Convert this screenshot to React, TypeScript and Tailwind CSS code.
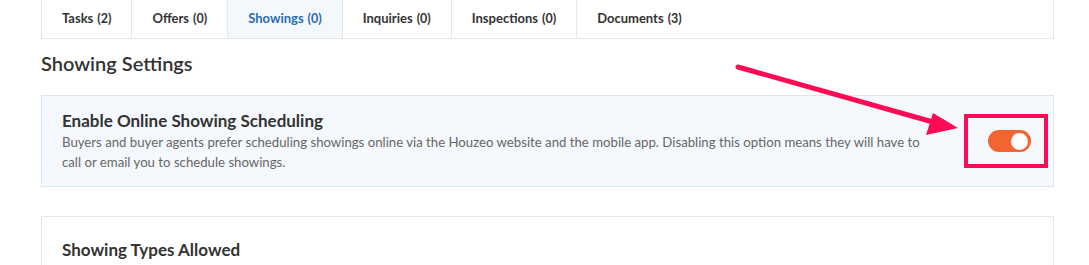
const tabs = [
  { label: "Tasks", count: 2 },
  { label: "Offers", count: 0 },
  { label: "Showings", count: 0, active: true },
  { label: "Inquiries", count: 0 },
  { label: "Inspections", count: 0 },
  { label: "Documents", count: 3 },
];

export default function App() {
  return (
    <main
      className="relative h-[265px] w-[1089px] overflow-hidden bg-white pl-[41px] pr-[35px]"
      style={{ fontFamily: "Lato, 'Noto Sans', sans-serif" }}
    >
      {/* Tabs */}
      <div className="flex h-[39px] border-x border-b border-[#e6e6e6] bg-white">
        {tabs.map((t) => (
          <div
            key={t.label}
            className={`flex items-center border-r border-[#e6e6e6] px-5 text-[13px] font-bold last:border-r-0 ${
              t.active ? "bg-[#f3f8fd] text-[#2a6bb0]" : "text-[#333]"
            }`}
          >
            {t.label}
            <span className="ml-[4px] text-[12.5px]">({t.count})</span>
          </div>
        ))}
      </div>

      <h2 className="mt-[10px] text-[20px] font-semibold leading-[28px] text-[#333]">
        Showing Settings
      </h2>

      {/* Online scheduling card */}
      <div className="mt-[18px] flex h-[92px] items-center border border-[#dde6ee] bg-[#f5f9fd] pl-5 pr-[5px]">
        <div className="flex-1 pr-10">
          <h3 className="text-[17px] font-bold leading-[22px] text-[#333]">
            Enable Online Showing Scheduling
          </h3>
          <p className="text-[13.2px] leading-[20px] text-[#666]">
            Buyers and buyer agents prefer scheduling showings online via the Houzeo website and the
            mobile app. Disabling this option means they will have to call or email you to schedule
            showings.
          </p>
        </div>
        <div className="flex h-[54px] w-[84px] items-center border-4 border-[#ff0a54] pl-5">
          <div className="flex h-[22px] w-[43px] items-center justify-end rounded-full bg-[#f26430] pr-[3px]">
            <div className="h-[17px] w-[17px] rounded-full bg-white" />
          </div>
        </div>
      </div>

      {/* Showing types card */}
      <div className="mt-[29px] h-[80px] border border-[#e8e8e8] bg-white px-5 pt-[22px]">
        <h3 className="text-[17px] font-bold leading-[22px] text-[#333]">Showing Types Allowed</h3>
      </div>

      {/* Annotation arrow */}
      <svg
        className="pointer-events-none absolute left-0 top-0"
        width="1089"
        height="265"
        viewBox="0 0 1089 265"
      >
        <line x1="738" y1="67" x2="940" y2="124" stroke="#ff0a54" strokeWidth="5" strokeLinecap="round" />
        <polygon points="958,128 933,113 926,135" fill="#ff0a54" />
      </svg>
    </main>
  );
}
